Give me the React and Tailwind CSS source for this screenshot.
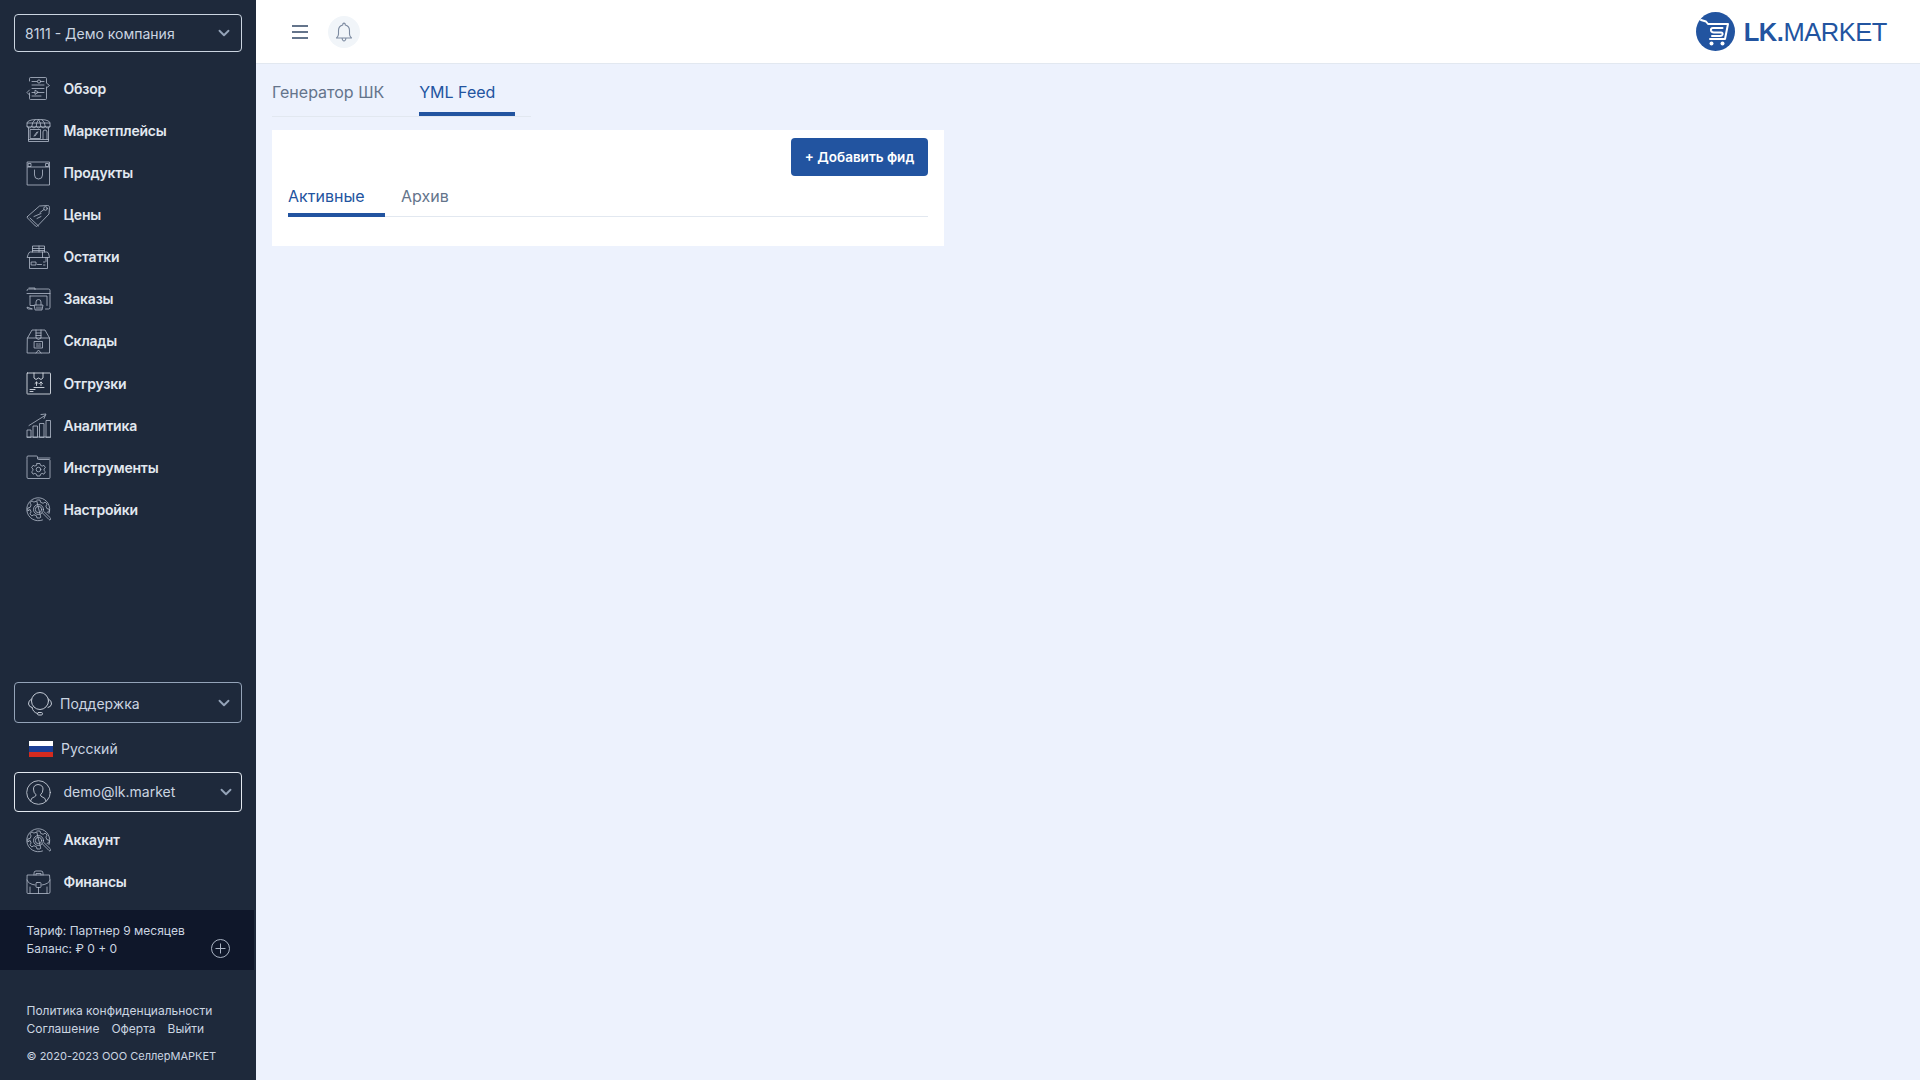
import { ChevronDown } from 'lucide-react';

const Svg = ({ children, size = 25 }) => (
    <svg width={size} height={size} viewBox="0 0 25 25" fill="none" stroke="#b4bdcb" strokeWidth="0.8" strokeLinecap="round" strokeLinejoin="round" className="shrink-0">
        {children}
    </svg>
);

const OverviewIcon = () => (
    <Svg>
        <path d="M3.500 5V2.500q0-1 1-1h15q1 0 1 1V7M3.500 17V22.500q0 1 1 1h15q1 0 1-1V11" />
        <path d="M6 5.500h5M15 5.500h3M6 9h12M6 12.500h12M11 16.500h7M6 20h9" />
        <circle cx="13" cy="5.500" r="1.600" />
        <path d="M21 7.500l2.500 2-2.500 2M3.500 14l-2.500 2.500 2.500 2.500M6 16.500h3l0 0M9 14.500v4l3-2z" />
    </Svg>
);
const MarketIcon = () => (
    <Svg>
        <path d="M2.500 10v13.500h20V10M1 8.500V6q0-1.500 1.500-3 2-1.500 10-1.500t10 1.500q1.500 1.500 1.500 3v2.500z" />
        <path d="M1 8.500q2.500 3 4.700 0 2.300 3 4.500 0 2.300 3 4.600 0 2.300 3 4.500 0 2.300 3 4.700 0M5.700 8.500Q6 4 9 1.600M10.200 8.500q0-4 2.300-7 2.300 3 2.300 7M19.300 8.500Q19 4 16 1.600M1 5h23" />
        <rect x="4.500" y="11.500" width="10" height="9" />
        <path d="M17 21V14q0-2 2-2t2 2v7M8 18l3-4M9 18l3-4M2.500 21.500h20" />
    </Svg>
);
const ProductIcon = () => (
    <Svg>
        <path d="M1.500 1h22v23h-22zM1.500 6h22" />
        <rect x="2.500" y="2.500" width="2.500" height="3" />
        <rect x="20" y="2.500" width="2.500" height="3" />
        <path d="M8.500 9v5q0 4 4 4t4-4V9" />
    </Svg>
);
const PriceIcon = () => (
    <Svg>
        <path d="M1.500 13.500L13.500 3l8-.5c1.500 0 2 1 2 2l-.5 6.500L11.500 23q-1 1-2 0l-8-8q-.8-.8 0-1.500z" />
        <path d="M4 15l8.500 8" />
        <circle cx="19.500" cy="5.500" r="1.800" />
        <path d="M8 13.500l7-3M11 15.500l4-2M18 6.500l-4 3" />
    </Svg>
);
const StockIcon = () => (
    <Svg>
        <path d="M6.500 7V1h12v6M6.500 3.500h12M6.500 5.500h12M13 1v6" />
        <path d="M3.500 12.500V23.500h18V12.500M1.500 12.500h22l-.8-3.500q-.5-2-2-2H4.300q-1.500 0-2 2z" />
        <rect x="5.500" y="17" width="4.500" height="3" />
        <path d="M11.500 19.500h4M17.500 17h1.500M17.500 20h1.500M16.500 7v5.500M20 12.500v4" />
    </Svg>
);
const OrderIcon = () => (
    <Svg>
        <path d="M1 3.500q0-1.500 1.500-1.500h20q1.500 0 1.500 1.500v17q0 1.500-1.500 1.500h-3M6 22H2.500Q1 22 1 20.500zM1 6.500h23M3 1h6v1.500" />
        <path d="M4 9h17v9.500M4 9v9.500h4" />
        <path d="M8.500 18h8.500l-1 5H9.500zM10 18v-3q0-2.500 2.500-2.500T15 15v3M11 20v2M13 20v2M15 20v2" />
    </Svg>
);
const WarehouseIcon = () => (
    <Svg>
        <path d="M1.500 9L6 1h13l4.500 8v15h-22zM1.500 9h22" />
        <path d="M10 1v8l2.500 1.500L15 9V1M10 4l5 0M10 6.500h5" />
        <rect x="8.500" y="12.500" width="8" height="6.500" />
        <path d="M10.500 15h1.500M13 15h1.500M10.500 17h4M10 24l2.500-3 2.500 3" />
    </Svg>
);
const ShipIcon = () => (
    <svg width="25" height="25" viewBox="0 0 25 25" fill="none" stroke="#d7dce4" strokeWidth="0.9" strokeLinecap="round" strokeLinejoin="round" className="shrink-0">
        <rect x="1" y="2" width="23.500" height="21" rx="0.500" />
        <path d="M8 2v5l2 1.500 2.500-1.500 2.500 1.500L17 7V2M8 16.500h10M4 18.500h5M4 20.500h3" />
        <path d="M10.500 14.500V11M9 12.500l1.500-1.500 1.500 1.500M15 14.500V11M13.500 12.500l1.500-1.500 1.500 1.500" />
    </svg>
);
const ChartIcon = () => (
    <Svg>
        <path d="M1 24v-7h4v7zM7 24V13h4.500v11zM13.500 24V10.500H18V24zM20 24V7.500h4.500V24zM1 24h23.500" />
        <path d="M3 12.500L19 2.500M15 1.500l5-.5-2 4.500" />
    </Svg>
);
const ToolIcon = () => (
    <Svg>
        <path d="M1 4V2q0-1 1-1h8.500q1 0 1 1v1.500q0 1 1 1h10.500q1 0 1 1v17q0 1-1 1H2q-1 0-1-1zM11.500 3h12.500" />
        <circle cx="12.500" cy="14.500" r="2.300" />
        <path d="M11 8.500h3l.5 1.800 1.700.8 1.700-.8 1.500 2.400-1.400 1.300v1.500l1.400 1.300-1.500 2.400-1.700-.8-1.700.8-.5 1.800h-3l-.5-1.800-1.700-.8-1.700.8-1.500-2.400 1.400-1.300V14l-1.400-1.300 1.500-2.400 1.700.8 1.700-.8z" />
    </Svg>
);
const GearSearchIcon = () => (
    <Svg>
        <path d="M23 16.500a11.500 11.500 0 1 0-6.500 6.500" />
        <path d="M11 3h3l.6 2.300 2.500 1 2-1.200 2 2-1.200 2 1 2.500 2.300.6v2.500l-2 .6M14.500 20.500l-.5.500h-3l-.6-2.300-2.500-1-2 1.200-2-2 1.200-2-1-2.500L1.800 14v-3l2.300-.6 1-2.500-1.200-2 2-2 2 1.200 2.500-1z" />
        <circle cx="12.500" cy="12.500" r="5" />
        <circle cx="12.500" cy="12.500" r="3.200" />
        <path d="M16.500 16l6.500 6.500q1 1 1.500 0t0-1.500L18 14.700" />
    </Svg>
);
const CaseIcon = () => (
    <Svg>
        <path d="M1.500 5h22l.5 6v11q0 1.500-1.500 1.500h-21Q1 23.500 1 22V11z" />
        <path d="M1 10q1 4 8 5M24 10q-1 4-8 5M8 5V3q0-2 2-2h5q2 0 2 2v2M10 5V3.500h5V5" />
        <rect x="10" y="12.500" width="5" height="5" rx="1" />
        <path d="M12.500 17.500v6M4 17v6M21 17v6" />
    </Svg>
);
const SupportIcon = () => (
    <svg width="26" height="26" viewBox="0 0 26 26" fill="none" stroke="#c3cad5" strokeWidth="1" strokeLinecap="round" className="shrink-0">
        <circle cx="13" cy="11" r="8.500" />
        <path d="M4.500 9Q1 11 1.500 14t3.500 3.500M21.500 9q3.500 2 3 5t-3.500 3.500M5 17.500q1 5 5.500 6" />
        <rect x="10.500" y="22.500" width="5" height="2.500" rx="1.200" />
    </svg>
);
const UserIcon = () => (
    <svg width="25" height="25" viewBox="0 0 25 25" fill="none" stroke="#c3cad5" strokeWidth="0.9" strokeLinecap="round" className="shrink-0">
        <circle cx="12.500" cy="12.500" r="11.800" />
        <path d="M4.500 21q.5-3.500 4-4.200 1.500-.5 1.500-2-2.500-2-2.500-5.800 0-4 4.500-4.500 5 .5 5 4.500 0 3.800-2.500 5.800 0 1.500 1.500 2 3.500.7 4 4.200" />
    </svg>
);

const mainNav = [
    ['Обзор', OverviewIcon],
    ['Маркетплейсы', MarketIcon],
    ['Продукты', ProductIcon],
    ['Цены', PriceIcon],
    ['Остатки', StockIcon],
    ['Заказы', OrderIcon],
    ['Склады', WarehouseIcon],
    ['Отгрузки', ShipIcon],
    ['Аналитика', ChartIcon],
    ['Инструменты', ToolIcon],
    ['Настройки', GearSearchIcon],
];

function NavItem({ label, Icon, height = 'h-[42px]' }) {
    return (
        <a className={`flex ${height} items-center gap-[12.500px] pl-[26px] text-sm font-semibold tracking-[-0.2px] text-[#e2e8f0]`}>
            <Icon />
            <span>{label}</span>
        </a>
    );
}

function Sidebar() {
    return (
        <aside className="flex h-full w-[256px] shrink-0 flex-col bg-[#1e293b] pt-[14px]">
            <button className="mx-[14px] flex h-[38px] w-[228px] items-center justify-between rounded border border-[#cbd5e1] pl-[10px] pr-[8px] text-sm text-[#cbd5e1]">
                <span className="pt-px">8111 - Демо компания</span>
                <ChevronDown size={18} strokeWidth={2.500} className="text-[#94a3b8]" />
            </button>
            <nav className="mt-[15.800px]">
                {mainNav.map(([label, Icon]) => (
                    <NavItem key={label} label={label} Icon={Icon} height="h-[42.100px]" />
                ))}
            </nav>

            <div className="mt-auto">
                <button className="mx-[14px] flex h-[41px] w-[228px] items-center rounded border border-[#94a3b8] pl-[12px] pr-[8px] text-sm text-[#cbd5e1]">
                    <SupportIcon />
                    <span className="ml-[7px] pt-[2px]">Поддержка</span>
                    <ChevronDown size={18} strokeWidth={2.500} className="ml-auto text-[#94a3b8]" />
                </button>
                <div className="flex h-[49px] items-center pl-[29px] pt-[2px] text-sm text-[#cbd5e1]">
                    <div className="flex h-4 w-6 flex-col">
                        <div className="h-[5px] bg-white" />
                        <div className="h-[6px] bg-[#1c3f94]" />
                        <div className="h-[5px] bg-[#d52b1e]" />
                    </div>
                    <span className="ml-[8px] pt-px">Русский</span>
                </div>
                <button className="mx-[14px] flex h-[40px] w-[228px] items-center rounded border border-[#e2e8f0] pl-[11px] pr-[6px] text-sm text-[#cbd5e1]">
                    <UserIcon />
                    <span className="ml-[12.500px]">demo@lk.market</span>
                    <ChevronDown size={18} strokeWidth={2.500} className="ml-auto text-[#94a3b8]" />
                </button>
                <div className="mt-[7px]">
                    <NavItem label="Аккаунт" Icon={GearSearchIcon} />
                    <NavItem label="Финансы" Icon={CaseIcon} />
                </div>
                <div className="mt-[7px] flex h-[60px] w-[254px] items-center justify-between bg-[#0f172a] pb-px pl-[26.500px] pr-[24px] text-xs leading-[18px] text-[#cbd5e1]">
                    <div>
                        <div>Тариф: Партнер 9 месяцев</div>
                        <div>Баланс: ₽ 0 + 0</div>
                    </div>
                    <svg width="19" height="19" viewBox="0 0 19 19" fill="none" stroke="#aab4c4" strokeWidth="1" className="mt-[18px] shrink-0">
                        <circle cx="9.500" cy="9.500" r="9" />
                        <path d="M9.500 4.500v10M4.500 9.500h10" />
                    </svg>
                </div>
                <footer className="h-[110px] pl-[26.500px] pt-[32px] text-xs leading-[18px] text-[#cbd5e1]">
                    <div>Политика конфиденциальности</div>
                    <div className="flex gap-3">
                        <span>Соглашение</span>
                        <span>Оферта</span>
                        <span>Выйти</span>
                    </div>
                    <div className="mt-[9px] text-[11px]">© 2020-2023 ООО СеллерМАРКЕТ</div>
                </footer>
            </div>
        </aside>
    );
}

function Logo() {
    return (
        <div className="flex items-center gap-[9px]">
            <svg width="39" height="39" viewBox="0 0 39 39">
                <circle cx="19.500" cy="19.500" r="19.500" fill="#2254a0" />
                <path d="M5 8l5 1.500 2 2.500H32l-3 15H14" fill="none" stroke="#fff" strokeWidth="2" strokeLinecap="round" strokeLinejoin="round" />
                <path d="M26.500 16H17q-2.500 0-2 2.500.5 2 3 2h7q2 0 1.500 2-.5 1.500-2.500 1.500h-8" fill="none" stroke="#fff" strokeWidth="2" strokeLinecap="round" />
                <circle cx="15.500" cy="31.500" r="2" fill="#fff" />
                <circle cx="26.500" cy="31.500" r="2" fill="#fff" />
            </svg>
            <span className="pt-[2px] font-['Liberation_Sans',sans-serif] text-[25.500px] leading-none tracking-[-0.45px] text-[#2254a0]">
                <b>LK.</b>MARKET
            </span>
        </div>
    );
}

function Header() {
    return (
        <header className="flex h-[64px] shrink-0 items-center border-b border-[#e2e8f0] bg-white pl-[36px] pr-[33px]">
            <svg width="16" height="14" viewBox="0 0 16 14" stroke="#64748b" strokeWidth="2" className="shrink-0">
                <path d="M0 1h16M0 7h16M0 13h16" />
            </svg>
            <div className="ml-[20px] flex h-8 w-8 items-center justify-center rounded-full bg-[#f1f5f9]">
                <svg width="18" height="20" viewBox="0 0 18 20" fill="none" stroke="#7c8aa0" strokeWidth="1.100" strokeLinejoin="round">
                    <path d="M1.500 16q2-1.500 2-4V8.500Q3.500 4 7.800 3V1.800Q9 .5 10.200 1.800V3q4.300 1 4.300 5.500V12q0 2.500 2 4zM7 16q.5 3 2 3t2-3" />
                </svg>
            </div>
            <div className="ml-auto">
                <Logo />
            </div>
        </header>
    );
}

export default function App() {
    return (
        <div className="flex h-screen overflow-hidden bg-[#edf2fd] font-['Inter',sans-serif]">
            <Sidebar />
            <div className="flex min-w-0 flex-1 flex-col">
                <Header />
                <main className="pl-[16px] pt-[3px]">
                    <div className="flex h-[50px] w-[259px] border-b border-[#e2e8f0] text-base">
                        <a className="flex items-center pt-px text-[#64748b]">Генератор ШК</a>
                        <a className="relative ml-[35px] flex w-[96px] items-center pt-px text-[#2254a0]">
                            YML Feed
                            <span className="absolute inset-x-0 bottom-0 h-1 bg-[#2254a0]" />
                        </a>
                    </div>
                    <section className="mt-[13px] h-[116px] w-[672px] bg-white px-4 pt-2">
                        <div className="flex justify-end">
                            <button className="h-[38px] w-[137px] rounded bg-[#2254a0] text-[13.500px] font-semibold text-white">+ Добавить фид</button>
                        </div>
                        <div className="flex h-[41px] border-b border-[#e2e8f0] text-base">
                            <a className="relative flex w-[97px] items-center text-[#2254a0]">
                                Активные
                                <span className="absolute inset-x-0 -bottom-px h-1 bg-[#2254a0]" />
                            </a>
                            <a className="ml-4 flex items-center text-[#64748b]">Архив</a>
                        </div>
                    </section>
                </main>
            </div>
        </div>
    );
}
